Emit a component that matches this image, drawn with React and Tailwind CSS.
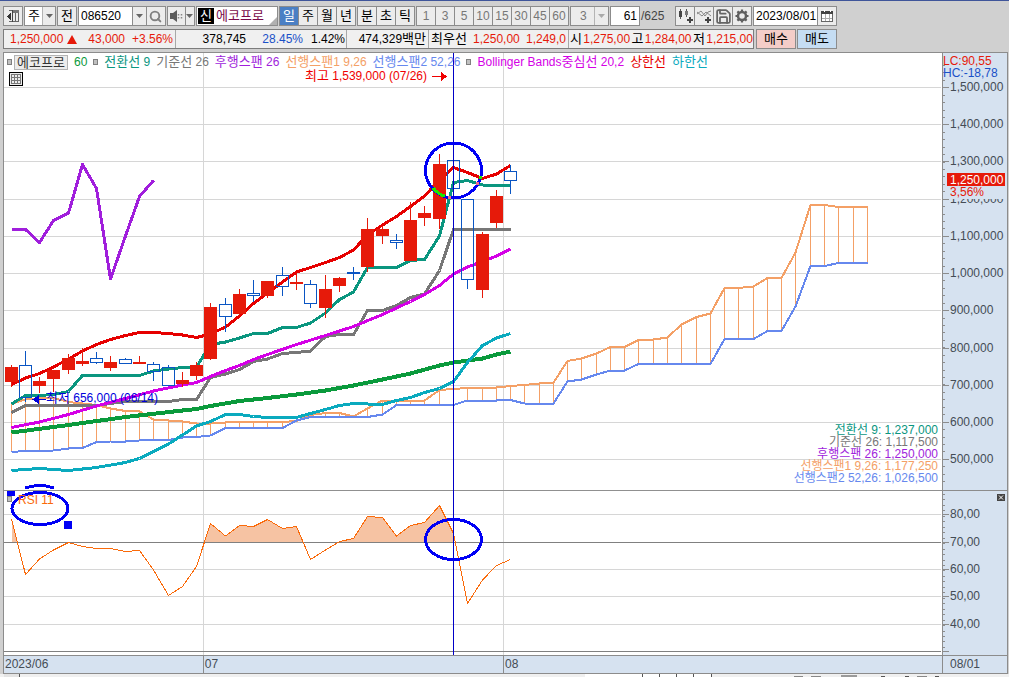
import React from "react";
import { Save, Search } from "lucide-react";

const xAt = (i) => Math.floor(11.1 + 14.27 * i) + 0.5;
const toPoints = (list) => list.map(([i, y]) => `${xAt(i)},${y}`).join(" ");
const series = (ys, start = 0) => ys.map((y, k) => [k + start, y]);

// [direction, high, low, body top, body bottom]
const candles = [
  ["u", 365, 387, 367, 382], ["d", 351, 402, 365, 397], ["u", 377, 393, 381, 386],
  ["u", 370, 392, 370, 379], ["u", 354, 374, 358, 370], ["u", 348, 366, 361, 364],
  ["d", 352, 364, 358, 362], ["u", 356, 371, 362, 368], ["d", 358, 363, 359, 363],
  ["u", 356, 364, 362, 364], ["d", 362, 381, 364, 371], ["d", 365, 385, 367, 385],
  ["u", 372, 387, 380, 384], ["u", 362, 380, 365, 376], ["u", 303, 360, 307, 359],
  ["d", 298, 332, 304, 316], ["u", 289, 315, 294, 314], ["d", 280, 302, 293, 295],
  ["u", 281, 298, 281, 296], ["d", 267, 296, 275, 286], ["u", 274, 290, 282, 284],
  ["d", 280, 308, 284, 303], ["u", 275, 318, 289, 308], ["u", 277, 292, 278, 286],
  ["d", 267, 280, 272, 273], ["u", 218, 272, 229, 267], ["u", 226, 244, 229, 236],
  ["d", 234, 249, 240, 242], ["u", 202, 261, 220, 261], ["u", 206, 226, 213, 218],
  ["u", 154, 229, 164, 219], ["d", 160, 188, 160, 188], ["d", 199, 289, 199, 279],
  ["u", 232, 298, 234, 290], ["u", 190, 228, 196, 223], ["d", 165, 194, 171, 180],
];

const upperBand = series([384.5, 378, 373.5, 367, 359, 351, 344.5, 339.5, 335.5, 332.5, 332.5, 333.5, 335, 337.5, 334, 327, 316, 303.5, 293, 282, 272, 267.5, 262.5, 257.5, 250, 235, 225, 216.5, 206.5, 196, 180, 167.5, 172.5, 178.5, 174, 165.5]);
const conversion = series([404, 395.5, 395.5, 394.5, 391.5, 375.5, 375.5, 375.5, 375.5, 375.5, 371, 369, 367.5, 367, 344.5, 342, 338, 333.5, 333.5, 327.5, 327.5, 323, 313, 299.5, 292, 267.5, 267.5, 267.5, 260.5, 259.5, 236, 182.5, 180.5, 185, 185.5, 185.5]);
const base = series([412.5, 405.5, 405.5, 405.5, 405.5, 405.5, 405.5, 403.5, 401.5, 401.5, 401.5, 401.5, 399.5, 399.5, 377.5, 374, 369.5, 361.5, 359, 353.5, 352.5, 351, 336.5, 334.5, 334.5, 310.5, 310.5, 305.5, 297.5, 294, 270.5, 229.5, 229.5, 229.5, 229.5, 229.5]);
const middleBand = [[0, 427.5], [2, 422], [4, 414.5], [6, 406], [8, 398.5], [10, 391], [12, 385], [13, 382.5], [14, 376.5], [15, 370.5], [16, 365.5], [17, 359.5], [18, 354.5], [20, 344.5], [22, 335.5], [24, 326.5], [26, 314.5], [28, 301.5], [29, 294.5], [30, 285.5], [31, 274], [32, 267], [33, 261.5], [34, 256], [35, 249]];
const ma60 = [[0, 432.5], [4, 425], [8, 417], [12, 410.5], [13, 409], [14, 406], [16, 401], [18, 398], [20, 394.5], [22, 390.5], [24, 385.5], [26, 379.5], [28, 373.5], [30, 365.5], [31, 362.5], [33, 358.5], [34, 354.5], [35, 351.5]];
const lowerBand = [[0, 470.5], [2, 468.5], [4, 470.5], [6, 467.5], [8, 462.5], [9, 458.5], [11, 444], [13, 426], [14, 421.5], [15, 414.5], [16, 414.5], [17, 416.5], [18, 417.5], [20, 417.5], [21, 413.5], [22, 409.5], [23, 405.5], [24, 403.5], [25, 404], [26, 404.5], [27, 400.5], [28, 397.5], [29, 392.5], [30, 388.5], [31, 381.5], [32, 362.5], [33, 345.5], [34, 338], [35, 333.5]];
const lagging = series([229.5, 229.5, 242.5, 220.5, 213, 164.5, 188.5, 279, 236, 196.5, 180.5]);
const spanA = [404, 399.5, 398, 398, 402, 403.5, 405, 408.5, 411, 411.5, 419.5, 420.5, 421.5, 423.5, 423.5, 422.5, 422, 422, 422, 422, 421, 415, 413, 413, 416.5, 408.5, 400.5, 400.5, 400.5, 400.5, 390, 389, 388, 388, 387.5, 386, 385, 383.5, 382.5, 361, 358.5, 353.5, 347, 347, 340, 339.5, 337.5, 324.5, 317, 313.5, 288, 288, 286.5, 278, 278, 252.5, 205, 205, 207, 207, 207];
const spanB = [452, 451, 451, 450.5, 448.5, 448, 442, 441.5, 441.5, 440.5, 440, 440, 437.5, 437, 435.5, 428, 428, 428, 428, 428, 420.5, 417, 417, 417, 417, 417, 414.5, 405, 405, 405, 405, 405, 400.5, 400.5, 400.5, 400, 403.5, 403.5, 403.5, 381.5, 379.5, 374.5, 370.5, 370.5, 364, 364, 364, 364, 364, 364, 339, 339, 339, 331, 331, 306.5, 266, 266, 263, 263, 263];
const rsi = series([519, 574.5, 559, 550, 542.5, 546.5, 548.5, 548.5, 551.5, 550.5, 570, 595.5, 586.5, 566.5, 523.5, 536, 525.5, 526.5, 519.5, 528.5, 526.5, 559.5, 550, 541.5, 538.5, 516.5, 517.5, 536, 525.5, 522.5, 505.5, 533.5, 603.5, 580, 565.5, 559.5]);

const priceTicks = [
  [87, "1,500,000"], [124, "1,400,000"], [161, "1,300,000"], [199, "1,200,000"], [236, "1,100,000"],
  [273, "1,000,000"], [310, "900,000"], [348, "800,000"], [385, "700,000"], [422, "600,000"], [459, "500,000"],
];
const rsiTicks = [[514, "80,00"], [542, "70,00"], [569, "60,00"], [596, "50,00"], [624, "40,00"]];

// Korean runs are set larger than the figures beside them.
function Mixed({ text }) {
  return text.split(/([\uac00-\ud7a3]+)/).filter(Boolean).map((part, i) => (
    <span key={i} className={/[\uac00-\ud7a3]/.test(part) ? "text-[13px]" : "whitespace-pre"}>{part}</span>
  ));
}

function Group({ className = "", children }) {
  return (
    <div className={`flex h-5 shrink-0 divide-x divide-[#8c8c8c] border border-[#8c8c8c] bg-[#ececec] ${className}`}>
      {children}
    </div>
  );
}

function ToolButton({ label, className = "", children }) {
  return (
    <button
      type="button"
      aria-label={label}
      className={`flex min-w-0 flex-1 items-center justify-center ${className}`}
    >
      {children}
    </button>
  );
}

function Caret({ color = "#666666" }) {
  return (
    <svg width="7" height="4" viewBox="0 0 7 4" aria-hidden="true" className="pointer-events-none">
      <path d="M0 0h7L3.500 4z" fill={color} />
    </svg>
  );
}

function DropDown({ label, value, className = "", caretClass = "", caretColor }) {
  return (
    <div className={`relative flex h-5 shrink-0 border border-[#8c8c8c] ${className}`}>
      <select aria-label={label} defaultValue={value} className="w-full appearance-none bg-transparent pl-[3px] outline-none">
        <option>{value}</option>
      </select>
      <span className={`pointer-events-none absolute inset-y-0 right-0 flex items-center justify-center border-l border-[#b4b4b4] bg-[#ececec] ${caretClass}`}>
        <Caret color={caretColor} />
      </span>
    </div>
  );
}

function Toolbar() {
  return (
    <div className="flex items-center gap-px overflow-hidden pl-[3px] pt-[5px]">
      <Group className="w-5">
        <ToolButton label="패널 접기">
          <svg width="14" height="14" viewBox="0 0 14 14" shapeRendering="crispEdges" aria-hidden="true">
            <path d="M3 1.500h10M3 12.500h10M12.500 1v12M9.500 4v8" fill="none" stroke="#666" />
            <path d="M6 1h7v3H6z" fill="#777" />
            <path d="M5 4v7L1 7.500z" fill="#333" />
            <path d="M6.500 1v12" stroke="#444" />
          </svg>
        </ToolButton>
      </Group>
      <DropDown label="구분" value="주" className="w-8 bg-white" caretClass="w-[13px]" />
      <Group className="w-5"><ToolButton>전</ToolButton></Group>
      <Group className="w-[88px]">
        <input aria-label="종목코드" defaultValue="086520" className="w-[54px] bg-white pl-[2px] text-xs outline-none" />
        <ToolButton label="최근 종목"><Caret /></ToolButton>
        <ToolButton label="종목 검색" className="grow-[1.4]"><Search size={13} color="#808080" strokeWidth={3.5} /></ToolButton>
      </Group>
      <Group className="w-7">
        <ToolButton label="소리" className="grow-[2]">
          <svg width="13" height="12" viewBox="0 0 13 12" aria-hidden="true">
            <path d="M0 3h3l4-3v12L3 9H0z" fill="#5a5a5a" />
            <path d="M8.500 4v1.500M8.500 7v1.500M11.500 4v1.500M11.500 7v1.500" stroke="#888" strokeWidth="1.500" />
          </svg>
        </ToolButton>
        <ToolButton label="소리 설정"><Caret /></ToolButton>
      </Group>
      <div className="relative flex h-5 w-[82px] shrink-0 items-center border border-[#8c8c8c] bg-white pl-px">
        <span className="flex h-4 w-4 shrink-0 items-center justify-center bg-black text-white">신</span>
        <select aria-label="종목명" defaultValue="에코프로" className="min-w-0 flex-1 appearance-none bg-transparent pl-[2px] text-[#7a0a4a] outline-none">
          <option>에코프로</option>
        </select>
        <svg className="pointer-events-none absolute bottom-0 right-0" width="8" height="8" viewBox="0 0 8 8" aria-hidden="true">
          <path d="M8 0v8H0z" fill="#b0b0b0" />
        </svg>
      </div>
      <Group className="w-[77px]">
        <ToolButton className="bg-[#4a7fc4] text-white">일</ToolButton>
        <ToolButton>주</ToolButton>
        <ToolButton>월</ToolButton>
        <ToolButton>년</ToolButton>
      </Group>
      <Group className="w-[58px]">
        <ToolButton>분</ToolButton>
        <ToolButton>초</ToolButton>
        <ToolButton>틱</ToolButton>
      </Group>
      <Group className="w-[153px] text-xs text-[#777777]">
        {["1", "3", "5", "10", "15", "30", "45", "60"].map((n) => (
          <ToolButton key={n}>{n}</ToolButton>
        ))}
      </Group>
      <DropDown label="간격" value="3" className="w-[39px] bg-[#ececec] pl-[6px] text-xs text-[#777777]" caretClass="w-[14px]" caretColor="#aaaaaa" />
      <input aria-label="표시 봉 수" defaultValue="61" className="h-5 w-[30px] shrink-0 border border-[#8c8c8c] bg-white pr-[2px] text-right text-xs outline-none" />
      <span className="w-[33px] shrink-0 text-xs text-[#444444]">/625</span>
      <Group className="w-[77px]">
        <ToolButton label="차트 유형 추가">
          <svg width="15" height="15" viewBox="0 0 15 15" shapeRendering="crispEdges" aria-hidden="true">
            <path d="M2.500 0v10M8.500 0v8" stroke="#555" />
            <path d="M1 2h3v6H1z" fill="#444" />
            <path d="M7 2h3v4H7z" fill="#777" />
            <path d="M12 8v6M9 11h6" stroke="#444" strokeWidth="2" />
          </svg>
        </ToolButton>
        <ToolButton label="지표 추가">
          <svg width="15" height="15" viewBox="0 0 15 15" aria-hidden="true">
            <path d="M0 5l4-3 4 5 3-4 3-1M0 3l5 4 4-4 5 4" fill="none" stroke="#888" />
            <path d="M11 8v6M8 11h6" stroke="#444" strokeWidth="2" />
          </svg>
        </ToolButton>
        <ToolButton label="저장"><Save size={17} color="#666" strokeWidth={2.5} /></ToolButton>
        <ToolButton label="설정">
          <svg width="14" height="14" viewBox="0 0 14 14" aria-hidden="true" fill="none" stroke="#606060">
            <circle cx="7" cy="7" r="4" strokeWidth="2.500" />
            <path d="M7 .5v2M7 11.500v2M.5 7h2M11.500 7h2M2.400 2.400l1.500 1.500M10.100 10.100l1.500 1.500M2.400 11.600l1.500-1.500M10.100 3.900l1.500-1.500" strokeWidth="2.200" />
          </svg>
        </ToolButton>
      </Group>
      <Group className="w-[84px]">
        <input aria-label="날짜" defaultValue="2023/08/01" className="w-[64px] bg-white pl-[2px] text-xs outline-none" />
        <ToolButton label="달력">
          <svg width="12" height="12" viewBox="0 0 12 12" shapeRendering="crispEdges" aria-hidden="true">
            <path d="M.5 1.500h11v10H.5z" fill="#fff" stroke="#666" />
            <path d="M1 8h10M4 4v7M8 4v7" stroke="#aaa" />
            <path d="M0 1h12v3H0z" fill="#444" />
            <path d="M3 0v2M9 0v2" stroke="#fff" />
          </svg>
        </ToolButton>
      </Group>
    </div>
  );
}

function QuoteRow() {
  return (
    <div className="flex gap-0.5 overflow-hidden pl-[3px] pt-[3px]">
      <div className="flex h-5 w-[751px] shrink-0 items-center divide-x divide-[#a8a8a8] border border-[#7c7c7c] bg-[#f0f0f0] whitespace-nowrap text-xs">
        <div className="flex h-full w-[172px] items-center pl-[6px] pr-[2px] text-right text-[#e61a0a]">
          <span>1,250,000</span>
          <svg className="ml-1 shrink-0" width="10" height="9" viewBox="0 0 10 9" aria-label="상승"><path d="M5 0l5 9H0z" fill="#e61a0a" /></svg>
          <span className="flex-1">43,000</span>
          <span className="w-12">+3.56%</span>
        </div>
        <div className="flex h-full w-[171px] items-center text-right">
          <span className="w-[70px]">378,745</span>
          <span className="w-[57px] text-[#1a50c8]">28.45%</span>
          <span className="w-[42px]">1.42%</span>
        </div>
        <div className="flex h-full w-[82px] items-center justify-end pr-[2px]"><Mixed text="474,329백만" /></div>
        <div className="flex h-full w-[140px] items-center justify-between px-[2px]">
          <Mixed text="최우선" />
          <span className="text-[#e61a0a]">1,250,00</span>
          <span className="text-[#e61a0a]">1,249,0</span>
        </div>
        <div className="flex h-full flex-1 items-center justify-between pl-px">
          <Mixed text="시" />
          <span className="text-[#e61a0a]">1,275,00</span>
          <Mixed text="고" />
          <span className="text-[#e61a0a]">1,284,00</span>
          <Mixed text="저" />
          <span className="text-[#e61a0a]">1,215,00</span>
        </div>
      </div>
      <div className="flex gap-px">
        <button type="button" className="h-5 w-10 border border-[#8c8c8c] bg-[#f4cdc8]">매수</button>
        <button type="button" className="h-5 w-10 border border-[#8c8c8c] bg-[#c5ddf3]">매도</button>
      </div>
    </div>
  );
}

function Line({ data, color, width }) {
  return <polyline points={toPoints(data)} fill="none" stroke={color} strokeWidth={width} strokeLinejoin="round" />;
}

function Marker() {
  return <span className="h-[6px] w-[5px] shrink-0 border border-[#808080] bg-[#c0c0c0]" />;
}

function Legend() {
  return (
    <div className="absolute left-[3px] top-px flex h-4 items-center gap-[6px] whitespace-nowrap">
      <div className="flex items-center gap-[2px]">
        <Marker />
        <button type="button" className="h-[15px] w-[54px] border border-[#b4b4b4] bg-[#ececec] text-[13px] leading-[13px] text-[#333333]">에코프로</button>
      </div>
      <span className="text-[#0a9a3c]">60</span>
      <Marker />
      <span className="text-[#0a967f]"><Mixed text="전환선 9" /></span>
      <span className="text-[#777777]"><Mixed text="기준선 26" /></span>
      <span className="text-[#a01edc]"><Mixed text="후행스팬 26" /></span>
      <span className="text-[#f4a066]"><Mixed text="선행스팬1 9,26" /></span>
      <span className="text-[#6688ee]"><Mixed text="선행스팬2 52,26" /></span>
      <Marker />
      <span className="text-[#d400e6]"><Mixed text="Bollinger Bands중심선 20,2" /></span>
      <span className="text-[#e60000]"><Mixed text="상한선" /></span>
      <span className="text-[#0aaabe]"><Mixed text="하한선" /></span>
    </div>
  );
}

function Readout() {
  const rows = [
    ["전환선 9: 1,237,000", "text-[#0a967f]"],
    ["기준선 26: 1,117,500", "text-[#777777]"],
    ["후행스팬 26: 1,250,000", "text-[#a01edc]"],
    ["선행스팬1 9,26: 1,177,250", "text-[#f4a066]"],
    ["선행스팬2 52,26: 1,026,500", "text-[#6688ee]"],
  ];
  return (
    <div className="absolute right-1 top-[371px] text-right text-xs leading-3">
      {rows.map(([text, color]) => <div key={text} className={`h-3 ${color}`}>{text}</div>)}
    </div>
  );
}

function Plot() {
  const rsiArea = `${xAt(0)},700 ${toPoints(rsi)} ${xAt(35)},700`;
  return (
    <div className="relative min-w-0 flex-1 bg-white">
      <svg className="block h-[602px] w-full" viewBox="4 53 938 602" preserveAspectRatio="none" shapeRendering="crispEdges" role="img" aria-label="에코프로 일봉 차트">
        <defs>
          <clipPath id="overbought"><rect x="4" y="491" width="450" height="51" /></clipPath>
        </defs>
        <g stroke="#d6d6d6">
          {[...priceTicks, ...rsiTicks].map(([y]) => <path key={y} d={`M4 ${y + 0.5}H941`} />)}
          <path d="M203.500 53V655M503.500 53V655" />
        </g>
        <path d="M4 490.500H942" stroke="#909090" />

        <g stroke="#f4a066">
          {spanA.map((y, i) => <path key={i} d={`M${xAt(i)} ${y}V${spanB[i]}`} />)}
        </g>
        <Line data={series(spanA)} color="#f4a066" width={2} />
        <Line data={series(spanB)} color="#6688ee" width={2} />
        <Line data={upperBand} color="#e60000" width={3} />
        <Line data={conversion} color="#0a967f" width={3} />
        <Line data={base} color="#777777" width={3} />
        <Line data={lagging} color="#a01edc" width={3} />
        <Line data={middleBand} color="#d400e6" width={3} />
        <Line data={ma60} color="#0a9a3c" width={4} />
        <Line data={lowerBand} color="#0aaabe" width={3} />

        {candles.map(([dir, high, low, top, bottom], i) => {
          const x = xAt(i);
          return dir === "u" ? (
            <g key={i}>
              <path d={`M${x} ${high}V${low}`} stroke="#e61a0a" />
              <rect x={x - 6.5} y={top} width="13" height={bottom - top} fill="#e61a0a" />
            </g>
          ) : (
            <g key={i} fill="none" stroke="#0a55c3">
              <path d={`M${x} ${high}V${top}M${x} ${bottom}V${low}`} />
              <rect x={x - 6} y={top + 0.5} width="12" height={bottom - top} />
            </g>
          );
        })}

        <polygon points={rsiArea} fill="#f6c3a3" clipPath="url(#overbought)" />
        <path d="M4 542.500H941M4 651.500H941" stroke="#808080" />
        <Line data={rsi} color="#fa6a0a" width={1} />

        <path d="M453.500 53V655" stroke="#0000c8" />
        <g fill="none" stroke="#0000f5" strokeWidth="3">
          <ellipse cx="453.500" cy="170.500" rx="28" ry="27.500" />
          <ellipse cx="453.500" cy="539.500" rx="28" ry="20" />
          <ellipse cx="40" cy="508.500" rx="28" ry="16" />
          <path d="M25 488q15 -5 29 0" />
        </g>
        <path d="M433 188q6 7 12 8" fill="none" stroke="#1ee600" strokeWidth="3" />
        <path d="M479 176h3v3h-3z" fill="#1ee600" />
        <path d="M448 196h3v3h-3zM476 182h3v3h-3z" fill="#f06a8c" />
        <path d="M7 491h8v5H7zM64 521h8v8h-8z" fill="#0000f5" />
        <path d="M7.500 496.500h4v5h-4z" fill="#c0c0c0" stroke="#808080" />

        <path d="M432 76.500h10" stroke="#f00000" />
        <path d="M441 72l6 4.500-6 4.500z" fill="#f00000" />
        <path d="M38 399.500h8" stroke="#0000dc" />
        <path d="M39 395l-7 4.500 7 4.500z" fill="#0000dc" />
      </svg>
      <Legend />
      <button type="button" aria-label="데이터 표" className="absolute left-[5px] top-[19px] border border-black bg-[#ececec]">
        <svg width="12" height="12" viewBox="0 0 12 12" shapeRendering="crispEdges" aria-hidden="true">
          <path d="M1.500 1.500h9v9h-9zM1 4.500h10M1 7.500h10M4.500 1v10M7.500 1v10" fill="none" stroke="#777" />
        </svg>
      </button>
      <span className="absolute right-[515px] top-4 whitespace-nowrap text-[#f00000] leading-[14px]"><Mixed text="최고 1,539,000 (07/26)" /></span>
      <span className="absolute left-[42px] top-[338px] whitespace-nowrap text-[#0000dc] leading-[14px]"><Mixed text="최저 656,000 (06/14)" /></span>
      <span className="absolute left-[14px] top-[440px] text-[#fa6a0a] leading-[14px]">RSI 11</span>
      <Readout />
    </div>
  );
}

function Axis() {
  const minor = [];
  for (let k = 0; k < 57; k += 1) minor.push(Math.round(65 + k * 7.43));
  for (let k = 0; k < 29; k += 1) minor.push(Math.round(494 + k * 5.46));
  return (
    <div className="relative w-[65px] shrink-0 border-l border-[#8c8c8c] bg-[#d6e2f0]">
      <svg className="block h-[602px] w-16" viewBox="943 53 64 602" shapeRendering="crispEdges" fill="#444c55" fontSize="12">
        <g stroke="#8c8c8c">
          {minor.map((y) => <path key={y} d={`M943 ${y + 0.5}h2`} />)}
          {[...priceTicks, ...rsiTicks].map(([y]) => <path key={y} d={`M943 ${y + 0.5}h6`} />)}
          <path d="M943 651.500h6M943 490.500h64" />
        </g>
        {[...priceTicks, ...rsiTicks].map(([y, text]) => <text key={text} x="950" y={y + 4}>{text}</text>)}
        <path d="M949 186h56v13h-56z" fill="#d6e2f0" />
        <path d="M947 173h58v13h-58z" fill="#e61a0a" />
        <text x="950" y="184" fill="#ffffff">1,250,000</text>
        <text x="950" y="196" fill="#e61a0a">3,56%</text>
        <text x="943" y="65" fill="#e61a0a">LC:90,55</text>
        <text x="943" y="77" fill="#1a50c8">HC:-18,78</text>
      </svg>
      <button type="button" aria-label="지표 닫기" className="absolute right-[2px] top-[441px] h-[7px] w-2 bg-[#444444]">
        <svg width="8" height="7" viewBox="0 0 8 7" aria-hidden="true"><path d="M2 1.500l4 4M6 1.500l-4 4" stroke="#fff" /></svg>
      </button>
    </div>
  );
}

export default function App() {
  return (
    <main className="flex min-h-screen flex-col overflow-hidden border-t border-[#3f559a] bg-[#d0d0d0] font-['Liberation_Sans','Noto_Sans_CJK_KR',sans-serif] text-[13px] leading-4 text-black">
      <Toolbar />
      <QuoteRow />
      <section className="ml-[3px] mr-px mt-[3px] border border-[#8c8c8c] text-xs leading-4">
        <div className="flex">
          <Plot />
          <Axis />
        </div>
        <div className="flex h-[18px] border-t border-[#8c8c8c] bg-[#d6e2f0] text-[#444c55]">
          <div className="flex min-w-0 flex-1">
            <span className="w-[21.200%] pl-px">2023/06</span>
            <span className="w-[32%] border-l border-[#8c8c8c] pl-px">07</span>
            <span className="border-l border-[#8c8c8c] pl-px">08</span>
          </div>
          <span className="w-[65px] border-l border-[#8c8c8c] pl-[7px]">08/01</span>
        </div>
      </section>
      <div className="flex flex-1 bg-[#f0f0f0]">
        <span className="ml-1 h-[3px] w-4 border-r border-[#555555] bg-[#e4e4e4]" />
        <div className="ml-[56%] flex h-[3px] divide-x divide-[#555555] border-r border-[#555555] bg-white">
          <span className="w-[58px]" />
          <span className="w-[17px]" />
          <span className="w-[17px]" />
          <span className="w-[17px]" />
          <span className="w-[17px]" />
        </div>
        <div className="ml-[82px] flex h-[3px] items-end gap-2">
          <span className="h-px w-[9px] bg-[#888888]" />
          <span className="h-px w-[10px] bg-[#888888]" />
          <span className="ml-3 h-0.5 w-4 bg-[#9a9a9a]" />
          <span className="ml-4 h-px w-1 bg-[#555555]" />
          <span className="ml-3 h-px w-1 bg-[#555555]" />
          <span className="h-px w-[10px] bg-[#888888]" />
          <span className="h-px w-1 bg-[#555555]" />
        </div>
      </div>
    </main>
  );
}
